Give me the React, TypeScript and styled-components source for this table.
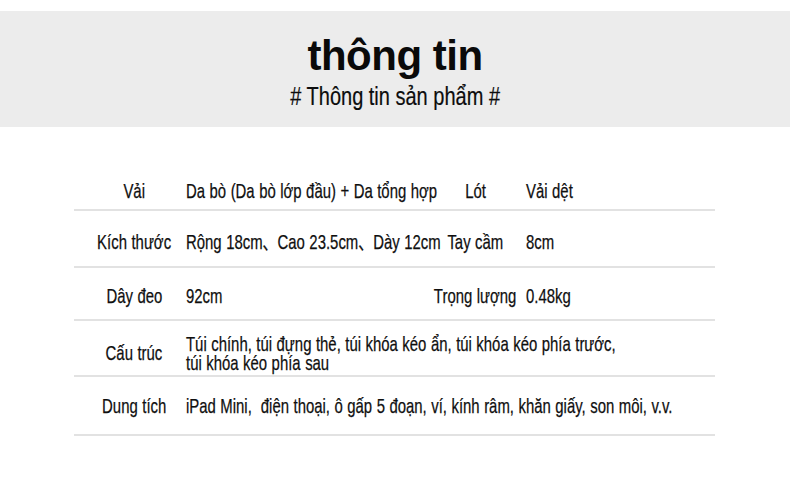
import styled, { createGlobalStyle } from "styled-components";

const GlobalStyle = createGlobalStyle`
  html, body {
    margin: 0;
    padding: 0;
    background: #ffffff;
  }
  body {
    font-family: "Liberation Sans", Arial, "Noto Sans CJK SC", sans-serif;
    color: #141414;
  }
`;

// no narrow face installed, so the condensed look is a horizontal squeeze of Liberation Sans
type Spec = {
  label: string;
  value: string;
  label2?: string;
  value2?: string;
  height: number;
  top: number;
};

const rows: Spec[] = [
  { label: "Vải", value: "Da bò (Da bò lớp đầu) + Da tổng hợp", label2: "Lót", value2: "Vải dệt", height: 40, top: 1 },
  { label: "Kích thước", value: "Rộng 18cm、Cao 23.5cm、Dày 12cm", label2: "Tay cầm", value2: "8cm", height: 57, top: 5 },
  { label: "Dây đeo", value: "92cm", label2: "Trọng lượng", value2: "0.48kg", height: 53, top: 4 },
  {
    label: "Cấu trúc",
    value: "Túi chính, túi đựng thẻ, túi khóa kéo ẩn, túi khóa kéo phía trước,\ntúi khóa kéo phía sau",
    height: 56,
    top: 9,
  },
  {
    label: "Dung tích",
    value: "iPad Mini,  điện thoại, ô gấp 5 đoạn, ví, kính râm, khăn giấy, son môi, v.v.",
    height: 59,
    top: 0,
  },
];

const App = () => {
  return (
    <Page>
      <GlobalStyle />
      <Banner>
        <Title>thông tin</Title>
        <Subtitle>
          <Squeeze k={0.8} origin="center"># Thông tin sản phẩm #</Squeeze>
        </Subtitle>
      </Banner>
      <Table>
        {rows.map((r) => (
          <Row key={r.label} h={r.height} top={r.top}>
            <Label>
              <Squeeze origin="center">{r.label}</Squeeze>
            </Label>
            {r.label2 ? (
              <>
                <Value>
                  <Squeeze>{r.value}</Squeeze>
                </Value>
                <Label>
                  <Squeeze origin="center">{r.label2}</Squeeze>
                </Label>
                <Value>
                  <Squeeze>{r.value2}</Squeeze>
                </Value>
              </>
            ) : (
              <Value wide>
                <Squeeze>{r.value}</Squeeze>
              </Value>
            )}
          </Row>
        ))}
      </Table>
    </Page>
  );
};

const Page = styled.div`
  width: 790px;
  height: 497px;
  overflow: hidden;
  padding-top: 11px;
  box-sizing: border-box;
`;

const Banner = styled.div`
  height: 116px;
  background: #ececec;
  display: flex;
  flex-direction: column;
  align-items: center;
  padding-top: 24px;
  box-sizing: border-box;
`;

const Title = styled.div`
  font-weight: 700;
  font-size: 42px;
  line-height: 42px;
  letter-spacing: -0.5px;
  color: #0a0a0a;
`;

const Subtitle = styled.div`
  font-size: 25px;
  line-height: 25px;
  margin-top: 7px;
  color: #0d0d0d;
  white-space: nowrap;
  -webkit-text-stroke: 0.2px #0d0d0d;
`;

const Squeeze = styled.span<{ k?: number; origin?: string }>`
  display: inline-block;
  white-space: pre;
  transform: scaleX(${(p) => p.k ?? 0.71});
  transform-origin: ${(p) => p.origin ?? "left"} center;
`;

const Table = styled.div`
  margin: 44px 0 0 74px;
  width: 641px;
`;

const Row = styled.div<{ h: number; top: number }>`
  height: ${(p) => p.h}px;
  box-sizing: border-box;
  border-bottom: 2px solid #e2e2e2;
  padding: ${(p) => p.top}px 0 0 16px;
  display: grid;
  grid-template-columns: 88px 239px 85px 1fr;
  column-gap: 8px;
  align-items: center;
  font-size: 21px;
  line-height: 19px;
  word-spacing: 0.5px;
  color: #0f0f0f;
  -webkit-text-stroke: 0.25px #0f0f0f;
`;

const Label = styled.div`
  display: flex;
  justify-content: center;
  white-space: nowrap;
`;

const Value = styled.div<{ wide?: boolean }>`
  white-space: nowrap;
  grid-column: ${(p) => (p.wide ? "2 / -1" : "auto")};
`;

export default App;
